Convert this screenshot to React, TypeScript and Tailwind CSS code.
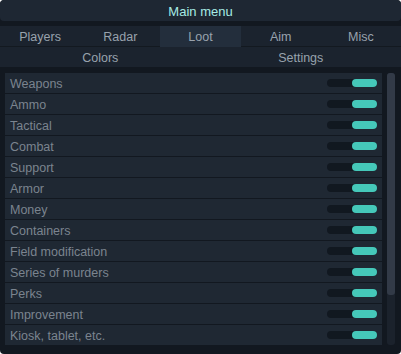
import React, { useState } from "react";

const tabs = ["Players", "Radar", "Loot", "Aim", "Misc"];
const subTabs = ["Colors", "Settings"];
const items = [
  "Weapons",
  "Ammo",
  "Tactical",
  "Combat",
  "Support",
  "Armor",
  "Money",
  "Containers",
  "Field modification",
  "Series of murders",
  "Perks",
  "Improvement",
  "Kiosk, tablet, etc.",
];

const Toggle = ({ on }: { on: boolean }) => (
  <div className="w-[50px] h-[8px] rounded-full bg-[#111820] flex">
    <div
      className={
        on
          ? "ml-auto w-[25px] h-full rounded-full bg-[#45c8b9]"
          : "w-[25px] h-full rounded-full bg-[#3a4452]"
      }
    />
  </div>
);

const App = () => {
  const [active] = useState("Loot");
  const [toggles, setToggles] = useState<boolean[]>(items.map(() => true));

  return (
    <div className="w-[401px] h-[354px] bg-[#121820] rounded-[4px] overflow-hidden font-['Liberation_Sans',Arial,sans-serif]">
      <div className="h-[21px] pt-[3px] bg-[#1e2733] rounded-[4px] flex items-center justify-center text-[13px] text-[#a6ebe5]">
        Main menu
      </div>
      <div className="h-[5px]" />
      <div className="grid grid-cols-5 h-[20px] bg-[#1b232e] text-[12.5px] text-[#98a2ad]">
        {tabs.map((t) => (
          <div
            key={t}
            className={
              "flex items-center justify-center pt-[2px] " +
              (t === active ? "bg-[#232e3c]" : "")
            }
          >
            {t}
          </div>
        ))}
      </div>
      <div className="h-px bg-[#131920]" />
      <div className="grid grid-cols-2 h-[20px] bg-[#1b232e] text-[12.5px] text-[#98a2ad]">
        {subTabs.map((t) => (
          <div key={t} className="flex items-center justify-center pt-[2px]">
            {t}
          </div>
        ))}
      </div>
      <div className="flex mt-[6px] pl-[5px] gap-[5px]">
        <div className="w-[377px] flex flex-col gap-px">
          {items.map((item, i) => (
            <div
              key={item}
              className="h-[20px] bg-[#1f2833] flex items-center justify-between pl-[5px] pr-[5px] text-[12.5px] text-[#7b848f]"
              onClick={() =>
                setToggles((prev) => prev.map((v, j) => (j === i ? !v : v)))
              }
            >
              <span className="pt-[2px]">{item}</span>
              <Toggle on={toggles[i]} />
            </div>
          ))}
        </div>
        <div className="w-[8px] h-[272px] rounded-[3px] bg-[#1b222c] flex flex-col">
          <div className="h-[222px] rounded-[3px] bg-[#323a47]" />
        </div>
      </div>
    </div>
  );
};

export default App;
